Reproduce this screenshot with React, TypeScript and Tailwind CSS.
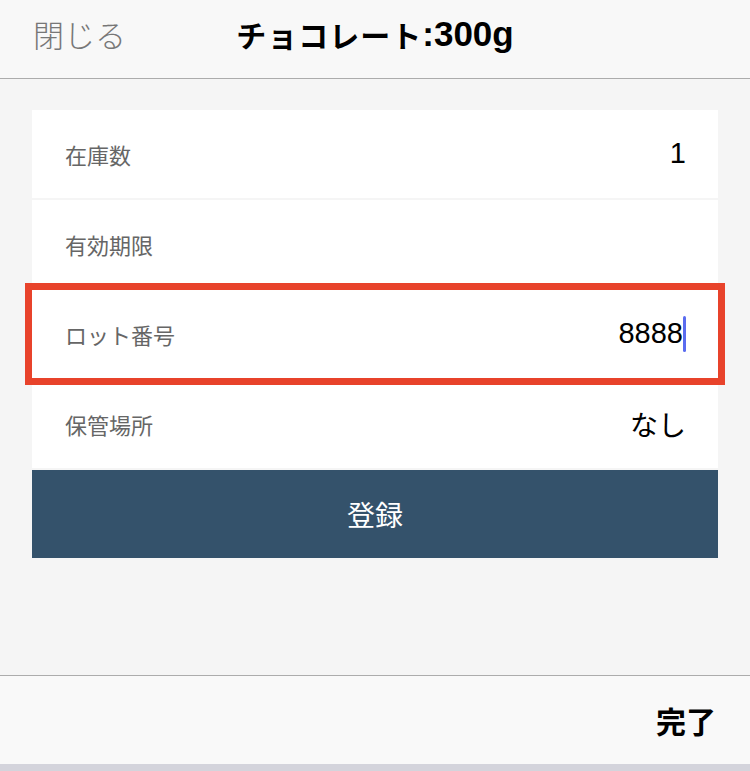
const latin = { fontFamily: '"Liberation Sans", "Noto Sans CJK JP", sans-serif' };

export default function App() {
  const rows = [
    { label: "在庫数", value: "1", latin: true },
    { label: "有効期限", value: "" },
    { label: "ロット番号", value: "8888", latin: true, focused: true },
    { label: "保管場所", value: "なし" },
  ];

  return (
    <div
      className="h-[771px] w-[750px] flex flex-col bg-[#f5f5f5] overflow-hidden"
      style={{ fontFamily: '"Noto Sans CJK JP", "Noto Sans", sans-serif' }}
    >
      {/* Header */}
      <div className="h-[79px] shrink-0 relative flex items-center pb-[9px] bg-[#f8f8f8] border-b border-[#acacac]">
        <span className="pl-[33px] text-[31px] text-[#777] font-light">閉じる</span>
        <h1 className="absolute inset-x-0 top-0 h-[78px] pb-[9px] flex items-center justify-center text-[30px] font-bold text-black tracking-[1px] pointer-events-none">
          チョコレート
          <span style={latin} className="text-[35px] tracking-normal">:300g</span>
        </h1>
      </div>

      {/* Form */}
      <div className="flex-1 px-[32px] pt-[31px]">
        <div className="flex flex-col gap-[2px]">
          {rows.map((row) => (
            <div
              key={row.label}
              className={`relative h-[88px] flex items-center justify-between bg-white pl-[33px] pr-[32px] ${
                row.focused ? "outline outline-[7px] outline-[#e8432b] z-10" : ""
              }`}
            >
              <span className="text-[22px] text-[#666]">{row.label}</span>
              <span
                style={row.latin ? latin : undefined}
                className={`flex items-center text-black ${row.latin ? "text-[29px]" : "text-[28px]"}`}
              >
                {row.value}
                {row.focused && <span className="inline-block w-[3px] h-[36px] bg-[#5a6cf0] rounded-sm" />}
              </span>
            </div>
          ))}
          <button className="w-full h-[88px] bg-[#34526b] text-white text-[28px] flex items-center justify-center">
            登録
          </button>
        </div>
      </div>

      {/* Footer */}
      <div className="h-[89px] shrink-0 flex items-center justify-end pr-[34px] bg-[#f9f9f9] border-t border-[#acacac]">
        <span className="text-[30px] font-bold text-black">完了</span>
      </div>
      <div className="h-[7px] shrink-0 bg-[#d4d4dc]" />
    </div>
  );
}
